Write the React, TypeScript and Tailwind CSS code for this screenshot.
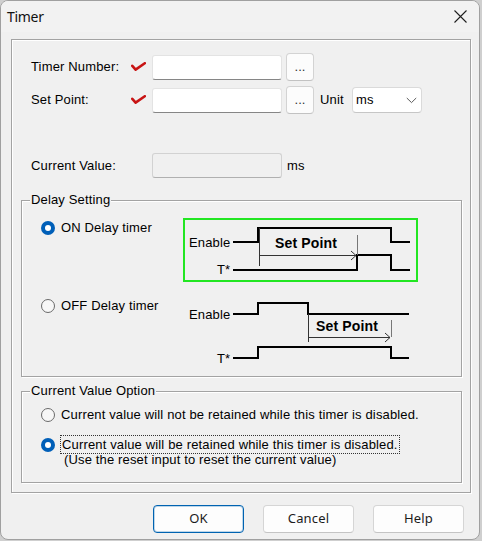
import React from "react";

const body = "font-['Liberation_Sans',Arial,sans-serif] text-[13px] tracking-[0.15px] text-black";

function Check() {
  return (
    <svg width="15" height="10" viewBox="0 0 15 10" className="shrink-0">
      <path d="M1.3 3.8 L4.6 7.6 L13.8 1.2" fill="none" stroke="#c81414" strokeWidth="2.6" strokeLinecap="round" strokeLinejoin="round" />
    </svg>
  );
}

function Radio({ checked }: { checked?: boolean }) {
  if (checked) {
    return (
      <span className="w-[14px] h-[14px] rounded-full bg-[#005fb8] flex items-center justify-center shrink-0">
        <span className="w-[6px] h-[6px] rounded-full bg-white" />
      </span>
    );
  }
  return <span className="w-[14px] h-[14px] rounded-full border border-[#6a6a6a] bg-[#f7f7f7] shrink-0" />;
}

function DotsButton() {
  return (
    <div className="w-[28px] h-[28px] rounded-[4px] border border-[#d3d3d3] border-b-[#c2c2c2] bg-[#fcfcfc] flex items-center justify-center text-[#333]">
      <span className="leading-[16px] tracking-[0px]">...</span>
    </div>
  );
}

function Input({ disabled }: { disabled?: boolean }) {
  return disabled ? (
    <div className="w-[130px] h-[25px] rounded-[3px] border border-[#d2d2d2] border-b-[#b0b0b0] bg-[#f0f0f0]" />
  ) : (
    <div className="w-[130px] h-[25px] rounded-[3px] border border-[#e3e3e3] border-b-[#868686] bg-white" />
  );
}

function Etched({ children, title, className }: { children: React.ReactNode; title: string; className?: string }) {
  return (
    <div className={"relative border border-[#a3a3a3] shadow-[1px_1px_0_#ffffff,inset_1px_1px_0_#ffffff] " + (className ?? "")}>
      <span className="absolute -top-[9px] left-[8px] px-[1px] bg-[#f0f0f0] leading-[16px]">{title}</span>
      {children}
    </div>
  );
}

const svgFont = "Liberation Sans, Arial, sans-serif";

function DiagramOn() {
  return (
    <svg width="231" height="60" viewBox="0 0 231 60">
      <text x="4" y="26.5" fontFamily={svgFont} fontSize="13" fill="#000">Enable</text>
      <text x="32" y="54" fontFamily={svgFont} fontSize="13" fill="#000">T*</text>
      <text x="90" y="28" fontFamily={svgFont} fontSize="14" fontWeight="bold" fill="#000">Set Point</text>
      <polyline points="48,22 73,22 73,8 206,8 206,22 225,22" fill="none" stroke="#000" strokeWidth="2" />
      <polyline points="48,50 172,50 172,35 206,35 206,50 225,50" fill="none" stroke="#000" strokeWidth="2" />
      <line x1="74.5" y1="8" x2="74.5" y2="46" stroke="#333" strokeWidth="1" />
      <line x1="74" y1="35.5" x2="171" y2="35.5" stroke="#333" strokeWidth="1" />
      <polyline points="166,31 171,35.5 166,40" fill="none" stroke="#333" strokeWidth="1" />
      <line x1="172.5" y1="15" x2="172.5" y2="35" stroke="#777" strokeWidth="1" />
    </svg>
  );
}

function DiagramOff() {
  return (
    <svg width="231" height="70" viewBox="0 0 231 70">
      <text x="4" y="22.7" fontFamily={svgFont} fontSize="13" fill="#000">Enable</text>
      <text x="32" y="66.5" fontFamily={svgFont} fontSize="13" fill="#000">T*</text>
      <text x="131" y="35" fontFamily={svgFont} fontSize="14" fontWeight="bold" fill="#000">Set Point</text>
      <polyline points="48,18 73,18 73,7 123,7 123,18 224,18" fill="none" stroke="#000" strokeWidth="2" />
      <polyline points="48,62 73,62 73,51 206,51 206,62 224,62" fill="none" stroke="#000" strokeWidth="2" />
      <line x1="123.5" y1="18" x2="123.5" y2="46" stroke="#333" strokeWidth="1" />
      <line x1="123" y1="41.5" x2="205" y2="41.5" stroke="#333" strokeWidth="1" />
      <polyline points="200,37 205,41.5 200,46" fill="none" stroke="#333" strokeWidth="1" />
      <line x1="206.5" y1="24" x2="206.5" y2="41" stroke="#777" strokeWidth="1" />
    </svg>
  );
}

function Btn({ label, primary }: { label: string; primary?: boolean }) {
  return (
    <div
      className={
        "w-[91px] h-[28px] rounded-[4px] flex items-center justify-center bg-[#fdfdfd] font-['Noto_Sans',sans-serif] text-[13px] text-[#1b1b1b] " +
        (primary
          ? "border border-[#0063b1] shadow-[inset_0_0_0_1px_rgba(0,99,177,0.25)]"
          : "border border-[#d5d5d5] border-b-[#c4c4c4]")
      }
    >
      {label}
    </div>
  );
}

export default function App() {
  return (
    <div className="w-[482px] h-[541px] bg-[#cfcfcf]">
      <div className={"w-[480px] h-[540px] bg-[#f0f0f0] border border-[#a0a0a0] rounded-[8px] overflow-hidden flex flex-col " + body}>
        {/* Title bar */}
        <div className="h-[31px] flex items-center justify-between pl-[6px] pr-[12px] bg-[#f2f2f2]">
          <span className="font-['Noto_Sans',sans-serif] text-[14px] tracking-[-0.3px] text-[#111]">Timer</span>
          <svg width="13" height="13" viewBox="0 0 13 13">
            <path d="M0.5 0.5 L12.5 12.5 M12.5 0.5 L0.5 12.5" stroke="#1f1f1f" strokeWidth="1.1" />
          </svg>
        </div>

        {/* Outer group box */}
        <div className="mt-[7px] ml-[10px] w-[460px] border border-[#a3a3a3] shadow-[1px_1px_0_#ffffff,inset_1px_1px_0_#ffffff] pb-[9px]">
          {/* Row 1 */}
          <div className="mt-[13px] h-[28px] flex items-center pl-[19px]">
            <span className="w-[100px] leading-[16px]">Timer Number:</span>
            <Check />
            <div className="ml-[6px]"><Input /></div>
            <div className="ml-[4px]"><DotsButton /></div>
          </div>
          {/* Row 2 */}
          <div className="mt-[5px] h-[28px] flex items-center pl-[19px]">
            <span className="w-[100px] leading-[16px]">Set Point:</span>
            <Check />
            <div className="ml-[6px]"><Input /></div>
            <div className="ml-[4px]"><DotsButton /></div>
            <span className="ml-[6px] w-[32px] leading-[16px]">Unit</span>
            <div className="w-[70px] h-[26px] rounded-[4px] border border-[#dadada] border-b-[#c6c6c6] bg-white flex items-center justify-between pl-[3px] pr-[4px]">
              <span className="leading-[16px]">ms</span>
              <svg width="11" height="7" viewBox="0 0 11 7">
                <path d="M0.8 1 L5.5 5.6 L10.2 1" fill="none" stroke="#5a5a5a" strokeWidth="1" />
              </svg>
            </div>
          </div>
          {/* Row 3 */}
          <div className="mt-[39px] h-[25px] flex items-center pl-[19px]">
            <span className="w-[121px] leading-[16px]">Current Value:</span>
            <Input disabled />
            <span className="ml-[5px] leading-[16px]">ms</span>
          </div>

          {/* Delay Setting */}
          <Etched title="Delay Setting" className="mt-[22px] ml-[9px] w-[441px] pb-[10px]">
            <div className="mt-[17px] flex">
              <div className="w-[161px] pl-[19px]">
                <div className="mt-[2px] h-[16px] flex items-center gap-[6px]">
                  <Radio checked />
                  <span className="leading-[16px]">ON Delay timer</span>
                </div>
              </div>
              <div className="w-[235px] h-[64px] border-2 border-[#22e622]">
                <DiagramOn />
              </div>
            </div>
            <div className="mt-[14px] flex">
              <div className="w-[161px] pl-[19px]">
                <div className="mt-[2px] h-[16px] flex items-center gap-[6px]">
                  <Radio />
                  <span className="leading-[16px]">OFF Delay timer</span>
                </div>
              </div>
              <div className="ml-[2px]">
                <DiagramOff />
              </div>
            </div>
          </Etched>

          {/* Current Value Option */}
          <Etched title="Current Value Option" className="mt-[14px] ml-[9px] w-[441px] pb-[15px]">
            <div className="mt-[15px] h-[16px] flex items-center gap-[6px] pl-[19px]">
              <Radio />
              <span className="leading-[16px]">Current value will not be retained while this timer is disabled.</span>
            </div>
            <div className="mt-[12px] flex items-start pl-[19px]">
              <div className="h-[19px] flex items-center">
                <Radio checked />
              </div>
              <div className="ml-[5px] flex flex-col">
                <span className="h-[19px] border border-dotted border-[#333] px-[1px] leading-[17px] self-start">
                  Current value will be retained while this timer is disabled.
                </span>
                <span className="-mt-[2px] pl-[4px] leading-[15px]">(Use the reset input to reset the current value)</span>
              </div>
            </div>
          </Etched>
        </div>

        {/* Buttons */}
        <div className="mt-[12px] flex justify-end gap-[19px] pr-[15px]">
          <Btn label="OK" primary />
          <Btn label="Cancel" />
          <Btn label="Help" />
        </div>
      </div>
    </div>
  );
}
